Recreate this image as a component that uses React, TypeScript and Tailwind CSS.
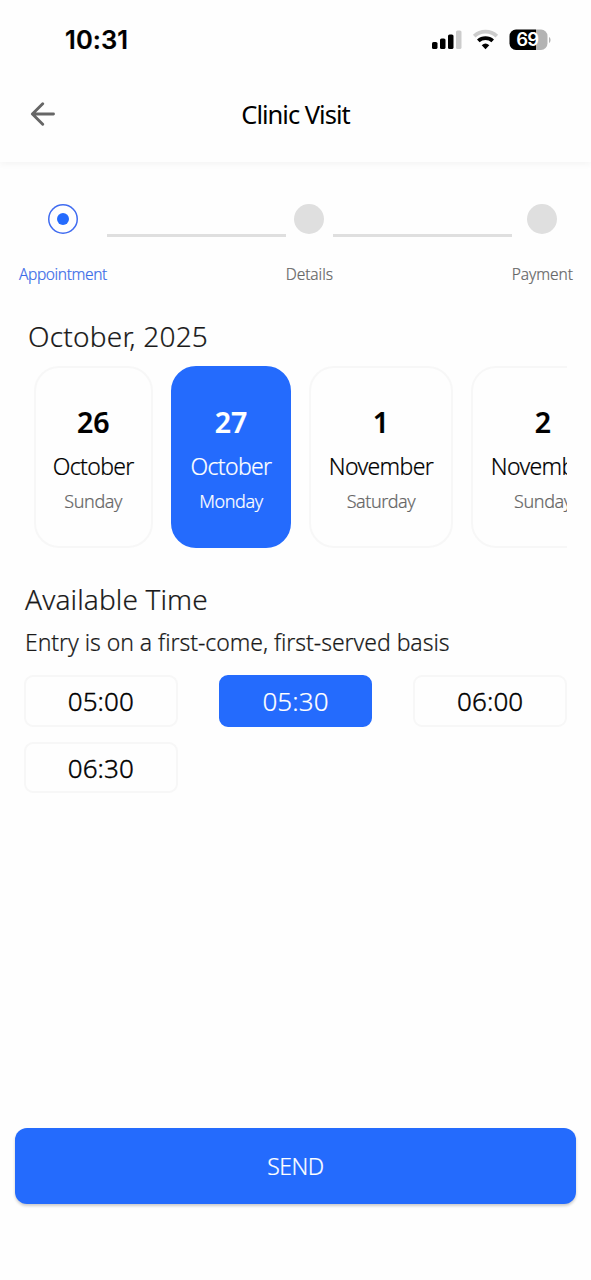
import { clsx } from "clsx";

const days = [
  { day: "26", month: "October", name: "Sunday", width: "w-[119.5px]" },
  { day: "27", month: "October", name: "Monday", width: "w-[120px]", active: true },
  { day: "1", month: "November", name: "Saturday", width: "w-[144px]" },
  { day: "2", month: "November", name: "Sunday", width: "w-[144px]" },
];

const times = ["05:00", "05:30", "06:00", "06:30"];

function StatusBar() {
  return (
    <div className="flex h-20 items-center justify-between pr-[39px] pl-[65px]">
      <span className="font-['Inter',sans-serif] text-[25.5px] leading-8 font-semibold tracking-[0.1px] text-black">10:31</span>
      <svg width="120" height="24" viewBox="0 0 120 24">
        <rect x="0" y="14" width="5.5" height="7" rx="1.6" />
        <rect x="8" y="10.5" width="5.5" height="10.500" rx="1.6" />
        <rect x="16" y="6.5" width="5.5" height="14.500" rx="1.6" />
        <rect x="24" y="2.500" width="5.5" height="18.500" rx="1.6" fill="#cccccc" />
        <path d="M42.2 8.200a16.500 16.500 0 0 1 22.600 0" fill="none" stroke="#cccccc" strokeWidth="3.800" />
        <path d="M46.300 12.900a10.600 10.600 0 0 1 14.400 0" fill="none" stroke="#000" strokeWidth="3.800" />
        <path d="M49.700 17.200a5.800 5.800 0 0 1 7.600 0l-3.800 4z" />
        <clipPath id="battery">
          <rect x="77.500" y="1.500" width="38" height="20.500" rx="6.500" />
        </clipPath>
        <g clipPath="url(#battery)">
          <rect x="77" y="1" width="27" height="22" />
          <rect x="104" y="1" width="12" height="22" fill="#b3b3b3" />
        </g>
        <path d="M117 9c2 .8 2 5.200 0 6z" fill="#b3b3b3" />
        <text x="95.300" y="18.200" textAnchor="middle" fontFamily="Inter, sans-serif" fontSize="18.500" fontWeight="600" letterSpacing="-0.8" fill="#fff">69</text>
      </svg>
    </div>
  );
}

function Step({ label, active }: { label: string; active?: boolean }) {
  return (
    <div className="flex flex-col items-center">
      <div
        className={clsx(
          "flex size-[30px] items-center justify-center rounded-full",
          active ? "shadow-[inset_0_0_0_1.5px_#3f6bf0]" : "bg-[#dfdfdf]",
        )}
      >
        {active && <div className="size-3 rounded-full bg-[#246bfd]" />}
      </div>
      <span
        className={clsx(
          "mt-[30px] text-[15.5px] leading-5 whitespace-nowrap",
          active ? "tracking-[-0.39px] text-[#3b6ce8]" : "tracking-[-0.05px] text-[#666]",
        )}
      >
        {label}
      </span>
    </div>
  );
}

function Line() {
  return <div className="mt-[30px] h-[3px] flex-1 bg-[#dfdfdf]" />;
}

export default function App() {
  return (
    <div className="flex h-[1280px] w-[591px] flex-col overflow-hidden bg-[#fefefe] font-['Noto_Sans',sans-serif] font-light text-black [-webkit-text-stroke:0.2px]">
      <header className="h-[162px] shrink-0 bg-[#fefefe] shadow-[0_3px_6px_rgba(0,0,0,0.035)]">
        <StatusBar />
        <div className="grid h-[68px] grid-cols-[1fr_auto_1fr] items-center">
          <svg className="ml-[30px]" width="26" height="24" viewBox="0 0 26 24" fill="none" stroke="#666" strokeWidth="2.900" strokeLinecap="round" strokeLinejoin="round">
            <path d="M23.500 12H2.500M12.700 1.700L2.400 12l10.300 10.300" />
          </svg>
          <h1 className="text-[25.5px] leading-8 font-normal tracking-[-1px] [-webkit-text-stroke:0px]">Clinic Visit</h1>
          <span />
        </div>
      </header>

      <div className="mt-[42px] flex pr-[18px] pl-[19px]">
        <Step label="Appointment" active />
        <Line />
        <Step label="Details" />
        <Line />
        <Step label="Payment" />
      </div>

      <h2 className="mt-8 pl-[28px] text-[28px] leading-10 tracking-[0.22px] text-[#1a1a1a]">October, 2025</h2>

      <div className="mt-[10px] mr-6 ml-[25px] flex gap-[18px] overflow-hidden pl-[8.5px]">
        {days.map((d) => (
          <div
            key={d.day}
            className={clsx(
              "flex h-[182px] shrink-0 flex-col items-center rounded-[25px] border-2",
              d.width,
              d.active ? "border-[#246bfd] bg-[#246bfd] text-white" : "border-[#f7f7f7]",
            )}
          >
            <span className="mt-[34px] text-[28.5px] leading-10 font-semibold">{d.day}</span>
            <span className="mt-2 text-[23px] leading-8 tracking-[-0.65px]">{d.month}</span>
            <span className={clsx("mt-[7px] text-[18px] leading-6 tracking-[-0.4px]", !d.active && "text-[#666]")}>{d.name}</span>
          </div>
        ))}
      </div>

      <h2 className="mt-[31px] pl-[25px] text-[28px] leading-10 tracking-[0.12px] text-[#1a1a1a]">Available Time</h2>
      <p className="mt-[7px] pl-[25px] text-[23px] leading-8 tracking-[-0.05px] text-[#1a1a1a]">Entry is on a first-come, first-served basis</p>

      <div className="mt-[17px] mr-6 ml-6 grid grid-cols-3 gap-x-[41px] gap-y-[15px]">
        {times.map((t) => (
          <button
            key={t}
            className={clsx(
              "flex h-[51.5px] items-center justify-center rounded-[9px] border-2 pt-px text-[26px] leading-8 tracking-[0.1px]",
              t === "05:30" ? "border-[#246bfd] bg-[#246bfd] text-white" : "border-[#f7f7f7] [-webkit-text-stroke:0.4px]",
            )}
          >
            {t}
          </button>
        ))}
      </div>

      <button className="mx-[15px] mt-auto mb-[76px] h-[76px] shrink-0 rounded-xl bg-[#246bfd] pt-px text-[23px] tracking-[-0.5px] text-white shadow-[0_2px_3px_rgba(0,0,0,0.2)]">
        SEND
      </button>
    </div>
  );
}
